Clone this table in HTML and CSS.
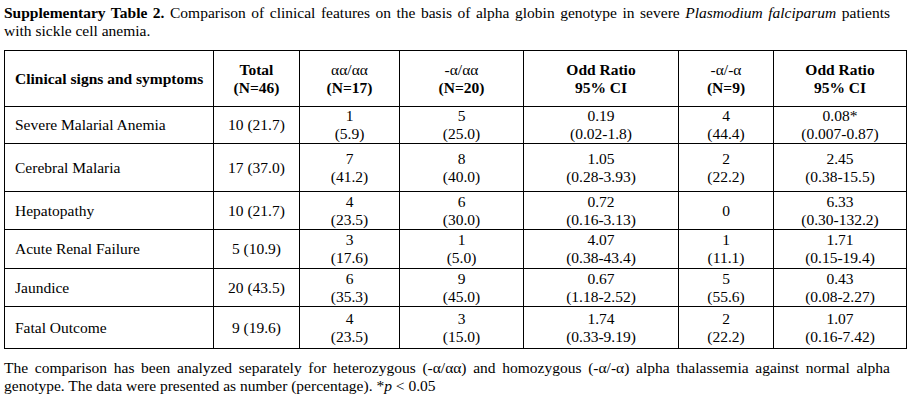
FILE: index.html
```html
<!DOCTYPE html>
<html>
<head>
<meta charset="utf-8">
<link rel="stylesheet" href="styles.css">
</head>
<body>
<div class="page">
  <p class="caption"><b>Supplementary Table 2.</b> Comparison of clinical features on the basis of alpha globin genotype in severe <i>Plasmodium falciparum</i> patients with sickle cell anemia.</p>
  <table class="data">
    <colgroup>
      <col class="c1"><col class="c2"><col class="c3"><col class="c4"><col class="c5"><col class="c6"><col class="c7">
    </colgroup>
    <thead>
      <tr class="r0">
        <th class="name">Clinical signs and symptoms</th>
        <th>Total<br>(N=46)</th>
        <th><span class="greek">αα/αα</span><br>(N=17)</th>
        <th><span class="greek">-α/αα</span><br>(N=20)</th>
        <th>Odd Ratio<br>95% CI</th>
        <th><span class="greek">-α/-α</span><br>(N=9)</th>
        <th>Odd Ratio<br>95% CI</th>
      </tr>
    </thead>
    <tbody>
      <tr class="r1">
        <td class="name">Severe Malarial Anemia</td>
        <td>10 (21.7)</td>
        <td>1<br>(5.9)</td>
        <td>5<br>(25.0)</td>
        <td>0.19<br>(0.02-1.8)</td>
        <td>4<br>(44.4)</td>
        <td>0.08*<br>(0.007-0.87)</td>
      </tr>
      <tr class="r2">
        <td class="name">Cerebral Malaria</td>
        <td>17 (37.0)</td>
        <td>7<br>(41.2)</td>
        <td>8<br>(40.0)</td>
        <td>1.05<br>(0.28-3.93)</td>
        <td>2<br>(22.2)</td>
        <td>2.45<br>(0.38-15.5)</td>
      </tr>
      <tr class="r3">
        <td class="name">Hepatopathy</td>
        <td>10 (21.7)</td>
        <td>4<br>(23.5)</td>
        <td>6<br>(30.0)</td>
        <td>0.72<br>(0.16-3.13)</td>
        <td>0</td>
        <td>6.33<br>(0.30-132.2)</td>
      </tr>
      <tr class="r4">
        <td class="name">Acute Renal Failure</td>
        <td>5 (10.9)</td>
        <td>3<br>(17.6)</td>
        <td>1<br>(5.0)</td>
        <td>4.07<br>(0.38-43.4)</td>
        <td>1<br>(11.1)</td>
        <td>1.71<br>(0.15-19.4)</td>
      </tr>
      <tr class="r5">
        <td class="name">Jaundice</td>
        <td>20 (43.5)</td>
        <td>6<br>(35.3)</td>
        <td>9<br>(45.0)</td>
        <td>0.67<br>(1.18-2.52)</td>
        <td>5<br>(55.6)</td>
        <td>0.43<br>(0.08-2.27)</td>
      </tr>
      <tr class="r6">
        <td class="name">Fatal Outcome</td>
        <td>9 (19.6)</td>
        <td>4<br>(23.5)</td>
        <td>3<br>(15.0)</td>
        <td>1.74<br>(0.33-9.19)</td>
        <td>2<br>(22.2)</td>
        <td>1.07<br>(0.16-7.42)</td>
      </tr>
    </tbody>
  </table>
  <p class="note">The comparison has been analyzed separately for heterozygous (-α/αα) and homozygous (-α/-α) alpha thalassemia against normal alpha genotype. The data were presented as number (percentage). *<i>p</i> &lt; 0.05</p>
</div>
</body>
</html>
```
FILE: styles.css
```css
html, body {
  margin: 0;
  padding: 0;
  background: #ffffff;
}
body {
  font-family: "Liberation Serif", "Times New Roman", serif;
  font-size: 15.5px;
  color: #000000;
}
.page {
  padding: 4px 0 0 4px;
  width: 886px;
}
.caption {
  margin: 0;
  line-height: 18px;
  text-align: justify;
}
.data {
  margin-top: 10px;
  border-collapse: collapse;
  width: 903px;
  table-layout: fixed;
}
.c1 { width: 209px; }
.c2 { width: 86px; }
.c3 { width: 100px; }
.c4 { width: 124px; }
.c5 { width: 155px; }
.c6 { width: 95px; }
.c7 { width: 133px; }
.data th, .data td {
  border: 1px solid #000000;
  padding: 0 2px;
  text-align: center;
  vertical-align: middle;
  line-height: 18px;
}
.data th {
  font-weight: bold;
}
.data .name {
  text-align: left;
  padding-left: 10px;
}
.greek {
  font-weight: normal;
}
.r0 { height: 56px; }
.r1 { height: 37px; }
.r2 { height: 48px; }
.r3 { height: 38px; }
.r4 { height: 39px; }
.r5 { height: 38px; }
.r6 { height: 42px; }
.note {
  margin: 10px 0 0 0;
  line-height: 18px;
  text-align: justify;
}
```
